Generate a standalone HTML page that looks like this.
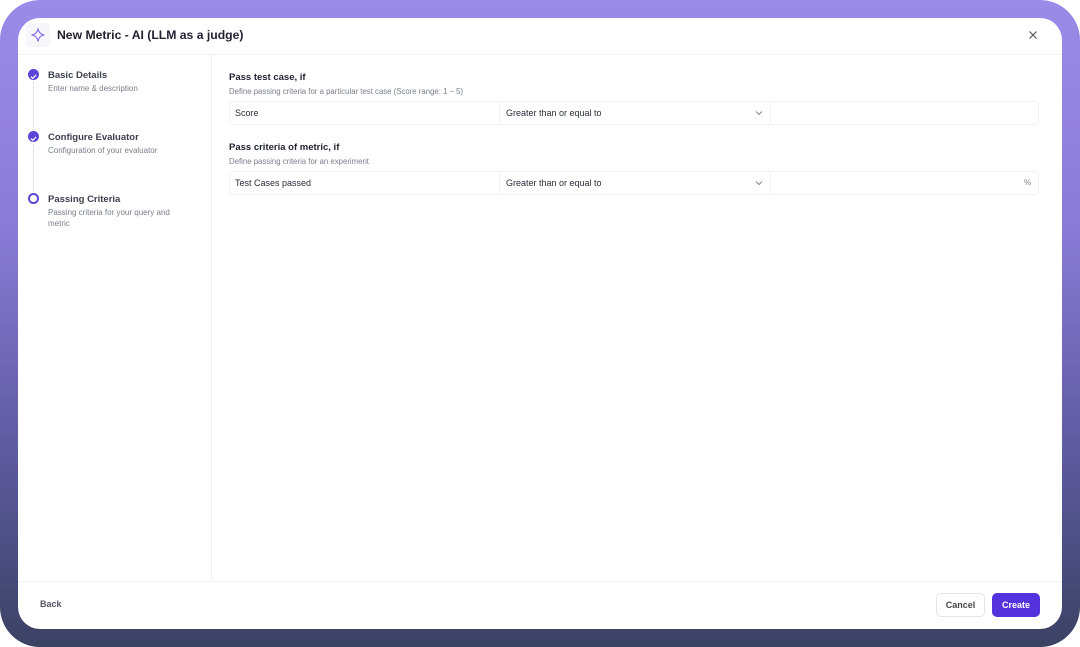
<!DOCTYPE html>
<html><head><style>
*{box-sizing:border-box;margin:0;padding:0}
html,body{width:1080px;height:647px;background:#fff;overflow:hidden;font-family:"Liberation Sans",sans-serif}
.frame{position:absolute;left:0;top:0;width:1080px;height:647px;border-radius:40px;background:linear-gradient(180deg,#9b8be9 0%,#8a7bd6 35%,#5e5a9f 70%,#3a4263 100%)}
.card{position:absolute;left:18px;top:18px;width:1044px;height:611px;background:#fff;border-radius:22px;overflow:hidden}
.hdr{position:absolute;left:0;top:0;width:100%;height:37px;border-bottom:1px solid #f1f1f4}
.logo{position:absolute;left:8px;top:5px;width:24px;height:24px;border-radius:4px;background:#f7f6fb}
.title{position:absolute;left:39px;top:10px;font-size:12.2px;font-weight:bold;color:#1f2130}
.close{position:absolute;left:1008px;top:10px}
.side{position:absolute;left:0;top:37px;width:194px;height:526px;border-right:1px solid #f1f1f4}
.step{position:absolute;left:30px;font-size:9px}
.step b{display:block;color:#3c3f4c;font-size:9.5px;margin-bottom:2px}
.step span{color:#7b7e8a;font-size:8px;line-height:11px;display:block;width:140px}
.dot{position:absolute;left:10px;width:11px;height:11px;border-radius:50%;background:#5a45d6}
.line{position:absolute;left:15px;width:1px;border-left:1px dotted #d4d4dc}
.main{position:absolute;left:211px}
h3{font-size:9.5px;color:#1f2130;font-weight:bold}
.sub{font-size:7.8px;color:#7b7e8a;margin-top:4px}
.row{position:absolute;left:0;width:810px;height:24px;border:1px solid #f2f2f4;border-radius:3px;font-size:9px;color:#2a2c38}
.row div{position:absolute;top:0;height:22px;line-height:22px}
.foot{position:absolute;left:0;top:563px;width:100%;height:48px;border-top:1px solid #f1f1f4}
.btn{position:absolute;top:575px;height:24px;border-radius:5px;font-size:9px;font-weight:bold;line-height:22px;text-align:center}
</style></head><body>
<div class="frame"></div>
<div class="card">
 <div class="hdr">
  <div class="logo"><svg width="24" height="24" viewBox="0 0 24 24"><path d="M12 5.5 Q12.8 11.2 18.5 12 Q12.8 12.8 12 18.5 Q11.2 12.8 5.5 12 Q11.2 11.2 12 5.5Z" fill="none" stroke="#8a70e0" stroke-width="1.1"/></svg></div>
  <div class="title">New Metric - AI (LLM as a judge)</div>
  <svg class="close" width="14" height="14" viewBox="0 0 14 14"><path d="M3.5 3.5l7 7M10.5 3.5l-7 7" stroke="#555" stroke-width="1.2"/></svg>
 </div>
 <div class="side">
  <div class="dot" style="top:14px"><svg width="11" height="11" viewBox="0 0 11 11"><path d="M3 5.6l1.8 1.8 3.3-3.5" fill="none" stroke="#fff" stroke-width="1.2"/></svg></div>
  <div class="line" style="top:27px;height:48px"></div>
  <div class="step" style="top:15px"><b>Basic Details</b><span>Enter name &amp; description</span></div>
  <div class="dot" style="top:76px"><svg width="11" height="11" viewBox="0 0 11 11"><path d="M3 5.6l1.8 1.8 3.3-3.5" fill="none" stroke="#fff" stroke-width="1.2"/></svg></div>
  <div class="line" style="top:89px;height:48px"></div>
  <div class="step" style="top:77px"><b>Configure Evaluator</b><span>Configuration of your evaluator</span></div>
  <div class="dot" style="top:138px;background:#fff;border:2.5px solid #5a45d6"></div>
  <div class="step" style="top:139px"><b>Passing Criteria</b><span>Passing criteria for your query and metric</span></div>
 </div>
 <div class="main" style="top:54px"><h3>Pass test case, if</h3><div class="sub">Define passing criteria for a particular test case (Score range: 1 – 5)</div></div>
 <div class="main" style="top:83px"><div class="row"><div style="left:5px">Score</div><div style="left:269px;border-left:1px solid #f2f2f4;padding-left:6px;width:271px">Greater than or equal to<svg style="position:absolute;left:255px;top:8px" width="8" height="6" viewBox="0 0 8 6"><path d="M1 1.5l3 3 3-3" fill="none" stroke="#888" stroke-width="1"/></svg></div><div style="left:540px;border-left:1px solid #f2f2f4;width:1px"></div></div></div>
 <div class="main" style="top:124px"><h3>Pass criteria of metric, if</h3><div class="sub">Define passing criteria for an experiment</div></div>
 <div class="main" style="top:153px"><div class="row"><div style="left:5px">Test Cases passed</div><div style="left:269px;border-left:1px solid #f2f2f4;padding-left:6px;width:271px">Greater than or equal to<svg style="position:absolute;left:255px;top:8px" width="8" height="6" viewBox="0 0 8 6"><path d="M1 1.5l3 3 3-3" fill="none" stroke="#888" stroke-width="1"/></svg></div><div style="left:540px;border-left:1px solid #f2f2f4;width:1px"></div><div style="left:794px;color:#888;font-size:8px">%</div></div></div>
 <div class="foot"></div>
 <div style="position:absolute;left:22px;top:581px;font-size:9px;font-weight:bold;color:#555866">Back</div>
 <div class="btn" style="left:918px;width:49px;border:1px solid #e4e4ea;color:#444">Cancel</div>
 <div class="btn" style="left:974px;width:48px;background:#5433dc;color:#fff;line-height:24px">Create</div>
</div>
</body></html>
